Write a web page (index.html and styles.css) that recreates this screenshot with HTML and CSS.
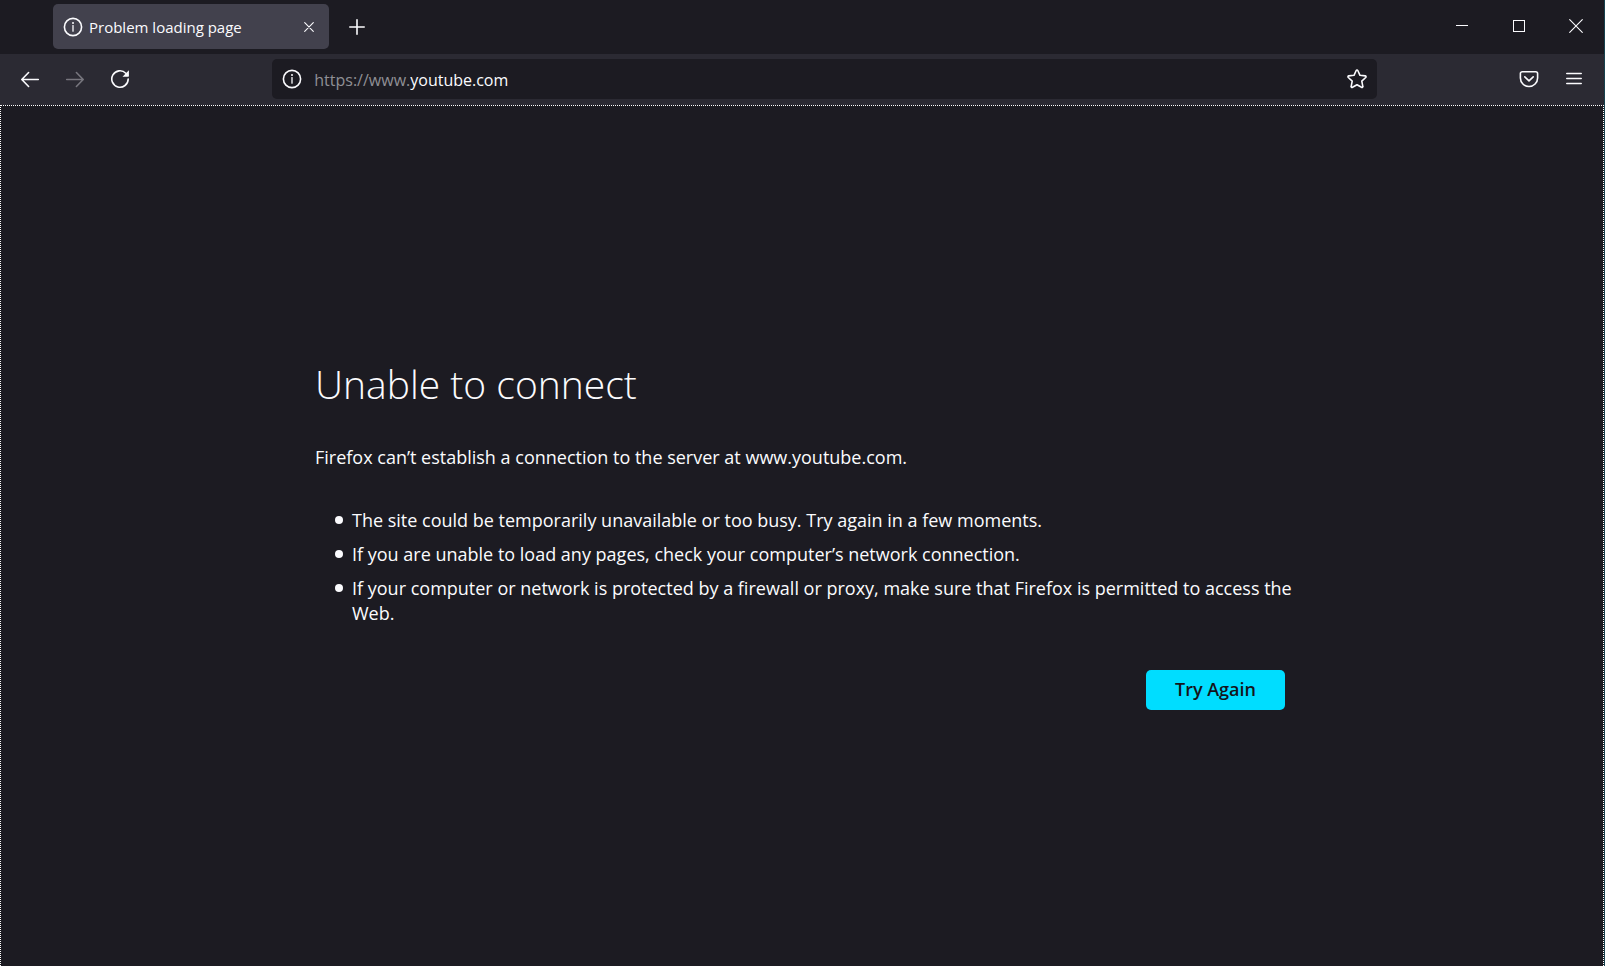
FILE: index.html
```
<!DOCTYPE html>
<html lang="en">
<head>
<meta charset="utf-8">
<title>Problem loading page</title>
<link rel="stylesheet" href="styles.css">
</head>
<body>
<div class="window">
  <header class="tabbar">
    <div class="tab">
      <svg class="icon" viewBox="0 0 20 20" width="20" height="20" aria-hidden="true"><circle cx="10" cy="10" r="8.6"/><path class="stem" d="M10 8.6v5.6"/><circle class="dot" cx="10" cy="6" r="1"/></svg>
      <span class="tab-title">Problem loading page</span>
      <button class="btn tab-close" type="button" aria-label="Close tab"><svg class="icon thin" viewBox="0 0 10 10" width="10" height="10"><path d="M.7.7l8.6 8.6M9.3.7L.7 9.3"/></svg></button>
    </div>
    <button class="btn new-tab" type="button" aria-label="New tab"><svg class="icon" viewBox="0 0 16 16" width="16" height="16"><path d="M8 .8v14.4M.8 8h14.4"/></svg></button>
    <div class="window-controls">
      <button class="btn control" type="button" aria-label="Minimize"><svg class="icon crisp" viewBox="0 0 14 14" width="14" height="14"><path d="M1 6.5h12"/></svg></button>
      <button class="btn control" type="button" aria-label="Maximize"><svg class="icon crisp" viewBox="0 0 14 14" width="14" height="14"><path d="M1.5 1.5h11v11h-11z"/></svg></button>
      <button class="btn control" type="button" aria-label="Close window"><svg class="icon thin" viewBox="0 0 14 14" width="14" height="14"><path d="M.7.7l12.6 12.6M13.3.7L.7 13.3"/></svg></button>
    </div>
  </header>

  <nav class="toolbar" aria-label="Navigation">
    <div class="group">
      <button class="btn tool" type="button" aria-label="Back"><svg class="icon" viewBox="0 0 20 20" width="20" height="20"><path d="M18.3 10.5H2M8.6 3.5L1.8 10.5l6.8 7"/></svg></button>
      <button class="btn tool" type="button" aria-label="Forward" disabled><svg class="icon" viewBox="0 0 20 20" width="20" height="20"><path d="M1.7 10.5H18M11.4 3.5l6.8 7-6.8 7"/></svg></button>
      <button class="btn tool" type="button" aria-label="Reload"><svg class="icon" viewBox="0 0 20 20" width="20" height="20"><path d="M15.8 4.2A8.2 8.2 0 1 0 18.2 10"/><path class="fill" d="M18.9 1.3v5.8a.6.6 0 0 1-.6.6h-5.8z"/></svg></button>
    </div>
    <div class="spacer"></div>
    <div class="urlbar">
      <button class="btn url-icon" type="button" aria-label="Site information"><svg class="icon" viewBox="0 0 20 20" width="20" height="20"><circle cx="10" cy="10" r="8.6"/><path class="stem" d="M10 8.6v5.6"/><circle class="dot" cx="10" cy="6" r="1"/></svg></button>
      <label class="scheme" for="address">https://www.</label>
      <input class="address" id="address" type="text" value="youtube.com" spellcheck="false">
      <button class="btn url-icon" type="button" aria-label="Bookmark this page"><svg class="icon" viewBox="0 0 20 20" width="20" height="20"><path d="M9.2 1.5a.9.9 0 0 1 1.6 0l2.2 4.8 5.2.6c.8.1 1.1 1 .5 1.6l-3.9 3.6 1 5.2c.2.8-.6 1.4-1.3 1L10 15.7l-4.5 2.6c-.7.4-1.5-.2-1.3-1l1-5.2L1.3 8.5c-.6-.6-.3-1.5.5-1.6L7 6.3z"/></svg></button>
    </div>
    <div class="spacer"></div>
    <div class="group">
      <button class="btn tool" type="button" aria-label="Save to Pocket"><svg class="icon" viewBox="0 0 20 20" width="20" height="20"><path d="M3.3 2.7h13.4a1.9 1.9 0 0 1 1.9 1.9v4.3a8.6 8.6 0 0 1-17.2 0V4.6a1.9 1.9 0 0 1 1.9-1.9z"/><path d="M5.8 7.8L10 11.8l4.2-4"/></svg></button>
      <button class="btn tool" type="button" aria-label="Open application menu"><svg class="icon" viewBox="0 0 20 20" width="20" height="20"><path d="M2.8 4.5h14.4M2.8 9.5h14.4M2.8 14.5h14.4"/></svg></button>
    </div>
  </nav>

  <main class="page">
    <section class="error">
      <h1 class="title">Unable to connect</h1>
      <p class="summary">Firefox can’t establish a connection to the server at www.youtube.com.</p>
      <ul class="tips">
        <li>The site could be temporarily unavailable or too busy. Try again in a few moments.</li>
        <li>If you are unable to load any pages, check your computer’s network connection.</li>
        <li>If your computer or network is protected by a firewall or proxy, make sure that Firefox is permitted to access the Web.</li>
      </ul>
      <div class="actions"><button class="try-again" type="button">Try Again</button></div>
    </section>
  </main>
</div>
</body>
</html>
```
FILE: styles.css
```
* { box-sizing: border-box; }

body {
  margin: 0;
  background: #1c1b22;
  color: #fbfbfe;
  font-family: "Open Sans", "Noto Sans", sans-serif;
}

.window {
  display: flex;
  flex-direction: column;
  min-height: 100vh;
  border-right: 1px solid #17414d;
}

.icon {
  display: block;
  flex: none;
  fill: none;
  stroke: currentColor;
  stroke-width: 1.6;
  stroke-linecap: round;
  stroke-linejoin: round;
}
.icon .dot, .icon .fill { fill: currentColor; stroke: none; }
.icon .stem { stroke-width: 1.3; }
.icon.thin { stroke-width: 1.1; }
.icon.crisp { stroke-width: 1; shape-rendering: crispEdges; stroke-linecap: butt; stroke-linejoin: miter; }

.btn {
  display: flex;
  align-items: center;
  justify-content: center;
  padding: 0;
  border: 0;
  background: none;
  color: inherit;
}
.btn:disabled { color: #77767e; }

.tabbar {
  display: flex;
  align-items: center;
  height: 54px;
  padding: 0 0 1px 53px;
}
.tab {
  display: flex;
  align-items: center;
  width: 276px;
  height: 45px;
  padding: 0 8px 0 10px;
  border-radius: 5px;
  background: #42414d;
}
.tab-title {
  flex: 1;
  padding-left: 6px;
  font-size: 15px;
  line-height: 20px;
  white-space: nowrap;
}
.tab-close { width: 24px; height: 30px; }
.new-tab { width: 40px; height: 40px; margin-left: 8px; }
.window-controls { display: flex; align-self: flex-start; margin-left: auto; }
.control { width: 57px; height: 52px; }

.toolbar {
  display: flex;
  align-items: center;
  height: 51px;
  padding: 0 7px 1px;
  background: #2b2a33;
}
.group { display: flex; }
.tool { width: 45px; height: 40px; }
.spacer { flex: 10; }
.urlbar {
  display: flex;
  flex: 84;
  align-items: center;
  height: 40px;
  padding: 0 5px;
  border-radius: 5px;
  background: #1c1b22;
  font-size: 16px;
}
.url-icon { width: 30px; height: 30px; }
.scheme { padding: 2px 0 0 7px; color: #8f8f95; }
.address {
  flex: 1;
  min-width: 0;
  padding: 2px 0 0;
  border: 0;
  outline: 0;
  background: none;
  color: inherit;
  font: inherit;
}

.page {
  display: flex;
  flex: 1;
  align-items: center;
  justify-content: center;
  padding: 0 4px 4px 0;
  border: 1px dotted #fff;
  border-bottom: 0;
}
.error { width: 100%; max-width: 970px; font-size: 18px; line-height: 25px; }
.title { margin: 0; font-size: 39px; font-weight: 300; line-height: 50px; }
.summary { margin: 36px 0 38px; }
.tips { display: grid; gap: 9px; margin: 0 -14px 0 0; padding-left: 20px; list-style: none; }
.tips li { display: flex; gap: 9px; }
.tips li::before {
  content: "";
  flex: none;
  width: 8px;
  height: 8px;
  margin-top: 8px;
  border-radius: 50%;
  background: currentColor;
}
.actions { display: flex; justify-content: flex-end; margin-top: 44px; }
.try-again {
  height: 40px;
  padding: 0 29px;
  border: 0;
  border-radius: 5px;
  background: #00ddff;
  color: #15141a;
  font: inherit;
  font-weight: 600;
}
```
